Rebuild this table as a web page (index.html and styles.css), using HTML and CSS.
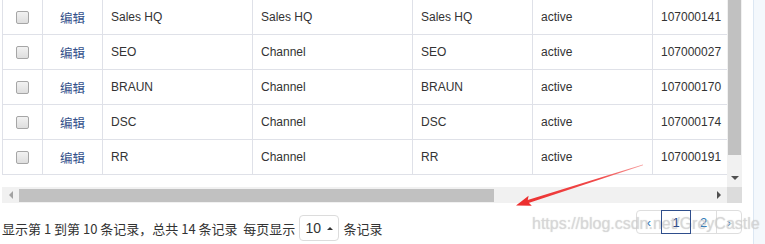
FILE: index.html
```
<!DOCTYPE html>
<html>
<head>
<meta charset="utf-8">
<link rel="stylesheet" href="styles.css">
</head>
<body>
<div class="page">
  <div class="main">
    <div class="scroller">
      <div class="viewport">
        <div class="grid">
          <div class="row">
            <div class="cell c-chk"><span class="chk"></span></div>
            <div class="cell c-edit"><a class="link">编辑</a></div>
            <div class="cell">Sales HQ</div>
            <div class="cell">Sales HQ</div>
            <div class="cell">Sales HQ</div>
            <div class="cell">active</div>
            <div class="cell">107000141</div>
          </div>
          <div class="row">
            <div class="cell c-chk"><span class="chk"></span></div>
            <div class="cell c-edit"><a class="link">编辑</a></div>
            <div class="cell">SEO</div>
            <div class="cell">Channel</div>
            <div class="cell">SEO</div>
            <div class="cell">active</div>
            <div class="cell">107000027</div>
          </div>
          <div class="row">
            <div class="cell c-chk"><span class="chk"></span></div>
            <div class="cell c-edit"><a class="link">编辑</a></div>
            <div class="cell">BRAUN</div>
            <div class="cell">Channel</div>
            <div class="cell">BRAUN</div>
            <div class="cell">active</div>
            <div class="cell">107000170</div>
          </div>
          <div class="row">
            <div class="cell c-chk"><span class="chk"></span></div>
            <div class="cell c-edit"><a class="link">编辑</a></div>
            <div class="cell">DSC</div>
            <div class="cell">Channel</div>
            <div class="cell">DSC</div>
            <div class="cell">active</div>
            <div class="cell">107000174</div>
          </div>
          <div class="row">
            <div class="cell c-chk"><span class="chk"></span></div>
            <div class="cell c-edit"><a class="link">编辑</a></div>
            <div class="cell">RR</div>
            <div class="cell">Channel</div>
            <div class="cell">RR</div>
            <div class="cell">active</div>
            <div class="cell">107000191</div>
          </div>
        </div>
      </div>
      <div class="vbar">
        <div class="vthumb"></div>
        <div class="vspace"></div>
        <div class="arrow-down"></div>
      </div>
      <div class="hbar">
        <div class="hbtn"><span class="arrow-left"></span></div>
        <div class="hthumb"></div>
        <div class="hspace"></div>
        <div class="hbtn"><span class="arrow-right"></span></div>
      </div>
      <div class="corner"></div>
    </div>
    <div class="footer">
      <div class="info">
        <span>显示第 1 到第 10 条记录，总共 14 条记录&nbsp;&nbsp;每页显示</span>
        <span class="select">10 <span class="caret"></span></span>
        <span>条记录</span>
      </div>
      <div class="pager">
        <span class="pg">‹</span>
        <span class="pg active">1</span>
        <span class="pg">2</span>
        <span class="pg">›</span>
      </div>
    </div>
  </div>
  <div class="gap"></div>
  <div class="side"></div>
</div>
<div class="watermark">https://blog.csdn.net/GreyCastle</div>
<svg class="annot" width="765" height="244" viewBox="0 0 765 244">
  <defs>
    <linearGradient id="fade" x1="643" y1="165" x2="517" y2="205" gradientUnits="userSpaceOnUse">
      <stop offset="0" stop-color="#f7a0a0"/>
      <stop offset="0.35" stop-color="#f04a4a"/>
      <stop offset="1" stop-color="#ec2f2f"/>
    </linearGradient>
  </defs>
  <polygon points="643.1,165.3 642.9,164.6 526.1,200.4 527.0,203.6" fill="url(#fade)"/>
  <polygon points="516,205.5 531.8,205.8 527.5,201.6 528.6,195.8" fill="#ec2f2f"/>
</svg>
</body>
</html>
```
FILE: styles.css
```
html, body {
  margin: 0;
  padding: 0;
  background: #ffffff;
}
body {
  font-family: "Liberation Sans", "Noto Sans CJK SC", sans-serif;
  font-size: 12px;
  color: #333333;
  position: relative;
  width: 765px;
  height: 244px;
  overflow: hidden;
}
.page {
  display: flex;
  height: 244px;
}
.main {
  width: 740px;
  margin-left: 2px;
  display: flex;
  flex-direction: column;
}
.gap {
  width: 11px;
}
.side {
  flex: 1;
  border-left: 1px solid #dce7f3;
  background: #f4f8fc;
}
.scroller {
  display: grid;
  grid-template-columns: 725px 15px;
  grid-template-rows: 187px 16px;
  height: 203px;
}
.viewport {
  overflow: hidden;
  background: #fff;
}
.grid {
  border-left: 1px solid #dfe1e8;
  width: 900px;
}
.row {
  display: grid;
  grid-template-columns: 40px 60px 150px 160px 120px 120px 120px;
  height: 35px;
}
.cell {
  box-sizing: border-box;
  border-right: 1px solid #dfe1e8;
  border-bottom: 1px solid #dfe1e8;
  padding: 0 8px;
  display: flex;
  align-items: center;
  white-space: nowrap;
}
.c-chk {
  justify-content: center;
  padding: 0;
}
.c-edit {
  justify-content: center;
  padding: 0;
}
.chk {
  width: 11px;
  height: 11px;
  border: 1px solid #a6a6a6;
  border-radius: 2px;
  background: linear-gradient(#f2f2f2, #dedede);
  margin-left: -1px;
}
.link {
  color: #33508a;
  font-size: 12.5px;
  font-family: "Noto Sans CJK SC", sans-serif;
}
.vbar {
  background: #f1f1f1;
  display: flex;
  flex-direction: column;
  align-items: center;
}
.vthumb {
  width: 13px;
  height: 155px;
  background: #c1c1c1;
}
.vspace {
  flex: 1;
}
.arrow-down {
  width: 0;
  height: 0;
  border-left: 4px solid transparent;
  border-right: 4px solid transparent;
  border-top: 4px solid #505050;
  margin-bottom: 7px;
}
.hbar {
  background: #f1f1f1;
  display: flex;
  align-items: center;
}
.hbtn {
  width: 17px;
  height: 16px;
  display: flex;
  align-items: center;
  justify-content: center;
}
.arrow-left {
  width: 0;
  height: 0;
  border-top: 4px solid transparent;
  border-bottom: 4px solid transparent;
  border-right: 4px solid #a3a3a3;
}
.arrow-right {
  width: 0;
  height: 0;
  border-top: 4px solid transparent;
  border-bottom: 4px solid transparent;
  border-left: 4px solid #505050;
}
.hthumb {
  width: 475px;
  height: 13px;
  background: #c1c1c1;
}
.hspace {
  flex: 1;
}
.corner {
  background: #dcdcdc;
}
.footer {
  display: flex;
  justify-content: space-between;
  align-items: flex-start;
  flex: 1;
}
.info {
  display: flex;
  align-items: center;
  gap: 4px;
  margin-top: 12px;
  font-family: "Noto Sans CJK SC", sans-serif;
  font-size: 13px;
  color: #333;
}
.select {
  box-sizing: border-box;
  width: 40px;
  height: 26px;
  border: 1px solid #dcdcdc;
  border-radius: 4px;
  display: flex;
  align-items: center;
  padding-left: 5px;
  gap: 6px;
  font-family: "Liberation Sans", sans-serif;
  font-size: 14px;
  color: #333;
}
.caret {
  width: 0;
  height: 0;
  border-left: 3px solid transparent;
  border-right: 3px solid transparent;
  border-bottom: 3px solid #333;
}
.pager {
  display: flex;
  margin-top: 7px;
}
.pg {
  box-sizing: border-box;
  height: 24px;
  width: 27px;
  border: 1px solid #dedede;
  margin-left: -1px;
  display: flex;
  align-items: center;
  justify-content: center;
  font-size: 13px;
  color: #337ab7;
}
.pg:first-child {
  border-radius: 4px 0 0 4px;
  margin-left: 0;
  width: 26px;
}
.pg:last-child {
  border-radius: 0 4px 4px 0;
  width: 26px;
}
.pg.active {
  width: 30px;
  border: 1px solid #2f4e8c;
  color: #2f4e8c;
  position: relative;
  z-index: 1;
}
.watermark {
  position: absolute;
  left: 532px;
  top: 215px;
  font-family: "Liberation Sans", sans-serif;
  font-size: 16px;
  color: rgba(215, 215, 215, 0.7);
  text-shadow: 0 0 1px rgba(150, 150, 150, 0.45);
  white-space: nowrap;
}
.annot {
  position: absolute;
  left: 0;
  top: 0;
  pointer-events: none;
}
```
